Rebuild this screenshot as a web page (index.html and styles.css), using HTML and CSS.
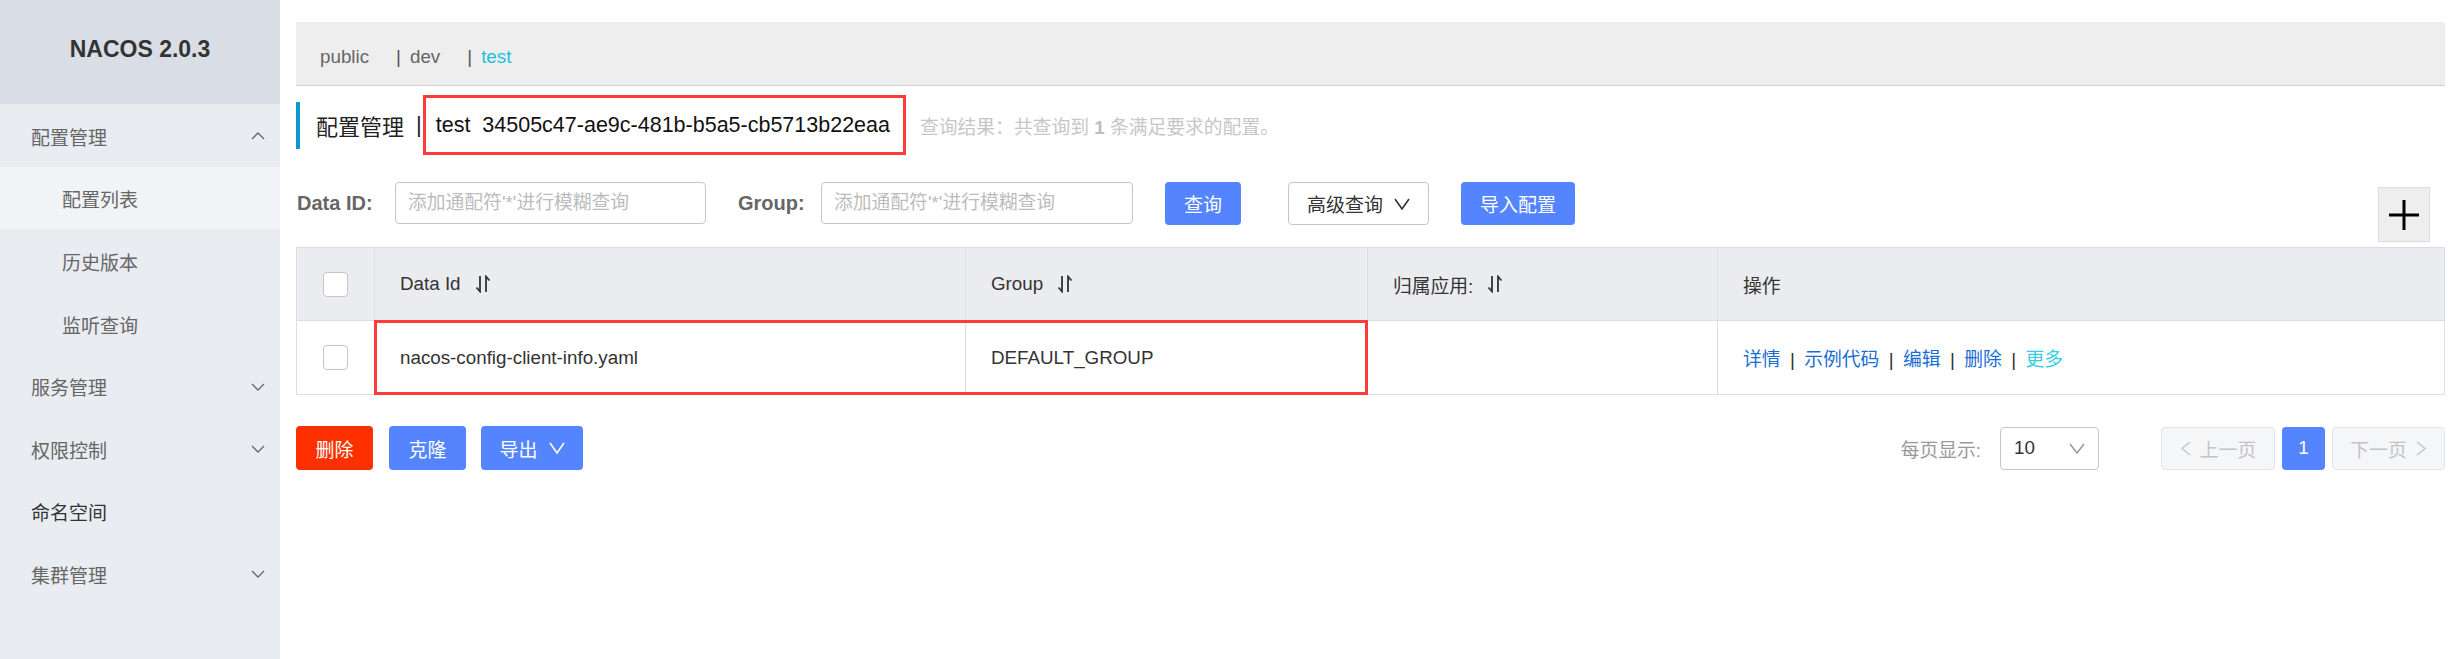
FILE: index.html
```html
<!DOCTYPE html>
<html lang="zh-CN">
<head>
<meta charset="utf-8">
<title>Nacos 配置列表</title>
<link rel="stylesheet" href="styles.css">
</head>
<body>
<div class="app">
  <aside class="sidebar">
    <div class="brand">NACOS 2.0.3</div>
    <nav class="menu">
      <div class="menu-item">
        <span>配置管理</span>
        <svg class="chev" width="14" height="8" viewBox="0 0 14 8"><polyline points="1,7 7,1 13,7" fill="none" stroke="#666" stroke-width="1.3"/></svg>
      </div>
      <div class="menu-item sub active">配置列表</div>
      <div class="menu-item sub">历史版本</div>
      <div class="menu-item sub">监听查询</div>
      <div class="menu-item">
        <span>服务管理</span>
        <svg class="chev" width="14" height="8" viewBox="0 0 14 8"><polyline points="1,1 7,7 13,1" fill="none" stroke="#666" stroke-width="1.3"/></svg>
      </div>
      <div class="menu-item">
        <span>权限控制</span>
        <svg class="chev" width="14" height="8" viewBox="0 0 14 8"><polyline points="1,1 7,7 13,1" fill="none" stroke="#666" stroke-width="1.3"/></svg>
      </div>
      <div class="menu-item plain">命名空间</div>
      <div class="menu-item">
        <span>集群管理</span>
        <svg class="chev" width="14" height="8" viewBox="0 0 14 8"><polyline points="1,1 7,7 13,1" fill="none" stroke="#666" stroke-width="1.3"/></svg>
      </div>
    </nav>
  </aside>

  <main class="main">
    <div class="ns-bar">
      <span class="ns">public</span>
      <span class="ns-sep">|</span>
      <span class="ns">dev</span>
      <span class="ns-sep">|</span>
      <span class="ns active">test</span>
    </div>

    <div class="title-row">
      <div class="title-bar"></div>
      <span class="title-text">配置管理</span>
      <span class="title-sep">|</span>
      <span class="ns-id">test  34505c47-ae9c-481b-b5a5-cb5713b22eaa</span>
      <span class="result">查询结果：共查询到 <b>1</b> 条满足要求的配置。</span>
    </div>

    <div class="search-row">
      <div class="field">
        <span class="label label-dataid">Data ID:</span>
        <input class="input" type="text" placeholder="添加通配符'*'进行模糊查询">
      </div>
      <div class="field field-group">
        <span class="label label-group">Group:</span>
        <input class="input input-group" type="text" placeholder="添加通配符'*'进行模糊查询">
      </div>
      <button class="btn btn-primary btn-query">查询</button>
      <button class="btn btn-normal btn-adv">高级查询
        <svg class="btn-chev" width="16" height="12" viewBox="0 0 16 12"><polyline points="1,1 8,11 15,1" fill="none" stroke="#333" stroke-width="1.6"/></svg>
      </button>
      <button class="btn btn-primary btn-import">导入配置</button>
      <button class="btn-plus" aria-label="add">
        <svg width="32" height="32" viewBox="0 0 32 32"><path d="M16 1V31M1 16H31" stroke="#000" stroke-width="3"/></svg>
      </button>
    </div>

    <div class="table-wrap">
      <table class="table">
        <colgroup>
          <col class="col-check"><col class="col-id"><col class="col-group"><col class="col-app"><col>
        </colgroup>
        <thead>
          <tr>
            <th class="cell-check"><span class="checkbox"></span></th>
            <th><span class="th-inner">Data Id
              <svg class="sort" width="17" height="18" viewBox="0 0 17 18"><path d="M5 1V16.5L1.5 12.5M11 17V1.5L14.5 5.5" fill="none" stroke="#333" stroke-width="1.8"/></svg></span></th>
            <th><span class="th-inner">Group
              <svg class="sort" width="17" height="18" viewBox="0 0 17 18"><path d="M5 1V16.5L1.5 12.5M11 17V1.5L14.5 5.5" fill="none" stroke="#333" stroke-width="1.8"/></svg></span></th>
            <th><span class="th-inner">归属应用:
              <svg class="sort" width="17" height="18" viewBox="0 0 17 18"><path d="M5 1V16.5L1.5 12.5M11 17V1.5L14.5 5.5" fill="none" stroke="#333" stroke-width="1.8"/></svg></span></th>
            <th>操作</th>
          </tr>
        </thead>
        <tbody>
          <tr>
            <td class="cell-check"><span class="checkbox"></span></td>
            <td>nacos-config-client-info.yaml</td>
            <td>DEFAULT_GROUP</td>
            <td></td>
            <td class="ops">
              <a class="link">详情</a><span class="sep">|</span><a class="link">示例代码</a><span class="sep">|</span><a class="link">编辑</a><span class="sep">|</span><a class="link">删除</a><span class="sep">|</span><a class="link more">更多</a>
            </td>
          </tr>
        </tbody>
      </table>
      <div class="mark-row"></div>
    </div>

    <div class="footer-row">
      <button class="btn btn-danger btn-del">删除</button>
      <button class="btn btn-primary btn-clone">克隆</button>
      <button class="btn btn-primary btn-export">导出
        <svg class="btn-chev" width="16" height="12" viewBox="0 0 16 12"><polyline points="1,1 8,11 15,1" fill="none" stroke="#fff" stroke-width="1.6"/></svg>
      </button>

      <div class="pager">
        <span class="pager-label">每页显示:</span>
        <div class="select">
          <span>10</span>
          <svg width="16" height="11" viewBox="0 0 16 11"><polyline points="1,1 8,10 15,1" fill="none" stroke="#999" stroke-width="1.5"/></svg>
        </div>
        <button class="page-btn page-prev">
          <svg width="11" height="15" viewBox="0 0 11 15"><polyline points="10,1 2,7.5 10,14" fill="none" stroke="#c8c8c8" stroke-width="1.6"/></svg>
          <span>上一页</span>
        </button>
        <button class="page-btn page-current">1</button>
        <button class="page-btn page-next">
          <span>下一页</span>
          <svg width="11" height="15" viewBox="0 0 11 15"><polyline points="1,1 9,7.5 1,14" fill="none" stroke="#c8c8c8" stroke-width="1.6"/></svg>
        </button>
      </div>
    </div>
  </main>
</div>
</body>
</html>
```

FILE: styles.css
```css
* { box-sizing: border-box; }
html, body { margin: 0; padding: 0; }
body {
  width: 2456px;
  height: 659px;
  overflow: hidden;
  background: #fff;
  font-family: "Liberation Sans", "Noto Sans CJK SC", sans-serif;
  font-size: 18.8px;
  color: #333;
}
button, input { font-family: inherit; }

.app { display: flex; height: 659px; }

/* ---------- sidebar ---------- */
.sidebar { width: 280px; flex: none; background: #e9ecf1; }
.brand {
  height: 104px;
  padding-bottom: 6px;
  background: #d9dee6;
  display: flex;
  align-items: center;
  justify-content: center;
  font-weight: bold;
  font-size: 23px;
  color: #333;
}
.menu-item {
  height: 62.6px;
  display: flex;
  align-items: center;
  padding: 2px 15px 0 31px;
  font-size: 19px;
  color: #666;
}
.menu-item.sub { padding-left: 62px; }
.menu-item.active { background: #f2f3f7; }
.menu-item.plain { color: #333; }
.menu-item .chev { margin-left: auto; }

/* ---------- main ---------- */
.main { flex: 1; min-width: 0; padding: 22px 11px 0 16px; }

.ns-bar {
  height: 64px;
  background: #eee;
  border-bottom: 1px solid #d3d3d3;
  display: flex;
  align-items: center;
  padding: 7px 0 0 24px;
  font-size: 18.8px;
  color: #666;
}
.ns-sep { margin: 0 9px 0 27px; color: #555; }
.ns.active { color: #1ec0db; }

.title-row {
  display: flex;
  align-items: center;
  height: 60px;
  margin-top: 9px;
}
.title-bar { width: 4px; height: 47px; background: #0b98cf; margin-right: 16px; }
.title-text { font-size: 22px; color: #222; }
.title-sep { font-size: 22px; margin: 0 1px 0 12px; color: #222; }
.ns-id {
  height: 60px;
  border: 3px solid #ff3b3b;
  padding: 0 13px 0 10px;
  display: flex;
  align-items: center;
  font-size: 21.5px;
  color: #111;
  white-space: pre;
}
.result { margin-left: 14px; color: #c6c6c6; font-size: 18.8px; }
.result b { color: #bdbdbd; }

.search-row { display: flex; align-items: flex-start; margin-top: 27px; }
.field { display: flex; align-items: center; height: 42px; }
.field-group { margin-left: 32px; }
.label { font-weight: bold; font-size: 20px; color: #666; }
.label-dataid { width: 99px; padding-left: 1px; }
.label-group { width: 83px; }
.input {
  width: 311px;
  height: 42px;
  border: 1px solid #c4c6cf;
  border-radius: 4px;
  padding: 0 12px;
  font-size: 18.8px;
  color: #333;
  background: #fff;
  outline: none;
}
.input-group { width: 312px; }
.input::placeholder { color: #bcbcbc; }

.btn {
  height: 43px;
  border-radius: 4px;
  display: inline-flex;
  align-items: center;
  justify-content: center;
  font-size: 19px;
  border: none;
  padding: 0;
  flex: none;
}
.btn-primary { background: #5584ff; color: #fff; }
.btn-normal { background: #fff; color: #333; border: 1px solid #c4c6cf; }
.btn-danger { background: #ff3000; color: #fff; }
.btn-chev { margin-left: 11px; }

.btn-query { width: 76px; margin-left: 32px; }
.btn-adv { width: 141px; margin-left: 47px; }
.btn-import { width: 114px; margin-left: 32px; }

.btn-plus {
  margin-left: auto;
  margin-right: 15px;
  margin-top: 5px;
  width: 52px;
  height: 55px;
  background: #eee;
  border: 1px solid #ddd;
  display: flex;
  align-items: center;
  justify-content: center;
  padding: 0;
}

/* ---------- table ---------- */
.table-wrap { position: relative; margin-top: 5px; }
.table {
  width: 100%;
  border-collapse: collapse;
  table-layout: fixed;
  font-size: 18.8px;
}
.col-check { width: 78px; }
.col-id { width: 591px; }
.col-group { width: 402px; }
.col-app { width: 350px; }
.table th {
  height: 73px;
  background: #ebecf0;
  border: 1px solid #dcdee3;
  text-align: left;
  font-weight: normal;
  padding: 0 25px;
  color: #333;
}
.table td {
  height: 74px;
  border: 1px solid #dcdee3;
  padding: 0 25px;
  color: #333;
}
.table .cell-check { padding: 0; text-align: center; }
.th-inner { display: inline-flex; align-items: center; }
.sort { margin-left: 14px; }
.checkbox {
  display: inline-block;
  width: 25px;
  height: 25px;
  border: 1px solid #c4c6cf;
  border-radius: 4px;
  background: #fff;
  vertical-align: middle;
}
.link { color: #1a6dd6; }
.link.more { color: #33cde5; }
.sep { margin: 0 9.4px; color: #333; }

.mark-row {
  position: absolute;
  left: 78px;
  top: 73px;
  width: 994px;
  height: 75px;
  border: 3px solid #ff3b3b;
}

/* ---------- footer ---------- */
.footer-row { display: flex; align-items: center; margin-top: 31px; }
.btn-del { width: 77px; height: 44px; }
.btn-clone { width: 77px; height: 44px; margin-left: 16px; }
.btn-export { width: 102px; height: 44px; margin-left: 15px; }

.pager { margin-left: auto; display: flex; align-items: center; }
.pager-label { color: #999; font-size: 18.8px; }
.select {
  margin-left: 19px;
  width: 99px;
  height: 43px;
  border: 1px solid #c4c6cf;
  border-radius: 4px;
  display: flex;
  align-items: center;
  justify-content: space-between;
  padding: 0 13px 0 13px;
  color: #333;
}
.page-btn {
  height: 43px;
  border-radius: 4px;
  display: flex;
  align-items: center;
  justify-content: center;
  font-size: 18.8px;
  padding: 0;
}
.page-prev, .page-next {
  background: #f5f6f8;
  border: 1px solid #e3e4e8;
  color: #c4c4c4;
  gap: 9px;
}
.page-prev { width: 114px; margin-left: 62px; }
.page-next { width: 113px; margin-left: 7px; }
.page-current {
  width: 43px;
  margin-left: 7px;
  background: #5584ff;
  border: none;
  color: #fff;
}
```
